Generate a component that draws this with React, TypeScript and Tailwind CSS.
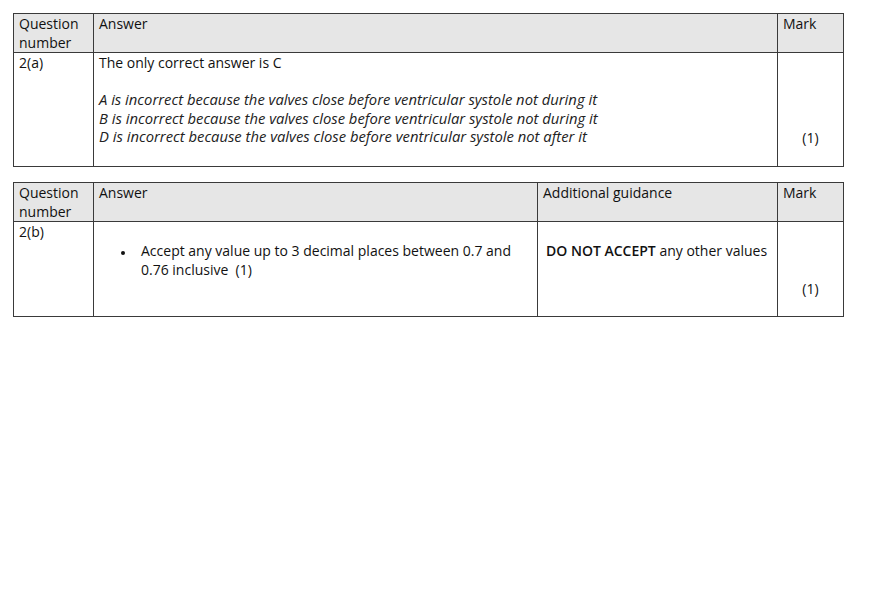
export default function App() {
  const cell = "border border-[#3a3a3a] align-top px-[5px] pt-0";
  const head = cell + " bg-[#e6e6e6]";
  return (
    <div
      className="w-[882px] h-[610px] bg-white pt-[13px] pl-[13px] text-[14px] leading-[19px] text-[#111]"
      style={{ fontFamily: '"Open Sans", "Noto Sans", sans-serif' }}
    >
      <table className="border-collapse table-fixed w-[830px]">
        <colgroup>
          <col className="w-[80px]" />
          <col className="w-[684px]" />
          <col className="w-[66px]" />
        </colgroup>
        <tbody>
          <tr className="h-[38px]">
            <td className={head}>Question number</td>
            <td className={head}>Answer</td>
            <td className={head}>Mark</td>
          </tr>
          <tr className="h-[114px]">
            <td className={cell}>2(a)</td>
            <td className={cell}>
              <p>The only correct answer is C</p>
              <div className="mt-[18px] italic text-[14.8px] leading-[18.5px] text-[#222]">
                <p>A is incorrect because the valves close before ventricular systole not during it</p>
                <p>B is incorrect because the valves close before ventricular systole not during it</p>
                <p>D is incorrect because the valves close before ventricular systole not after it</p>
              </div>
            </td>
            <td className={cell + " text-center"}>
              <p className="mt-[75px]">(1)</p>
            </td>
          </tr>
        </tbody>
      </table>

      <table className="border-collapse table-fixed w-[830px] mt-[15px]">
        <colgroup>
          <col className="w-[80px]" />
          <col className="w-[444px]" />
          <col className="w-[240px]" />
          <col className="w-[66px]" />
        </colgroup>
        <tbody>
          <tr className="h-[38px]">
            <td className={head}>Question number</td>
            <td className={head}>Answer</td>
            <td className={head}>Additional guidance</td>
            <td className={head}>Mark</td>
          </tr>
          <tr className="h-[95px]">
            <td className={cell}>2(b)</td>
            <td className={cell}>
              <ul className="mt-[19px] pl-[36px] list-disc marker:text-[10px]">
                <li className="pl-[6px]">
                  Accept any value up to 3 decimal places between 0.7 and 0.76 inclusive&nbsp; (1)
                </li>
              </ul>
            </td>
            <td className={cell}>
              <p className="mt-[19px] pl-[3px]">
                <span className="font-semibold">DO NOT ACCEPT</span> any other values
              </p>
            </td>
            <td className={cell + " text-center"}>
              <p className="mt-[57px]">(1)</p>
            </td>
          </tr>
        </tbody>
      </table>
    </div>
  );
}
